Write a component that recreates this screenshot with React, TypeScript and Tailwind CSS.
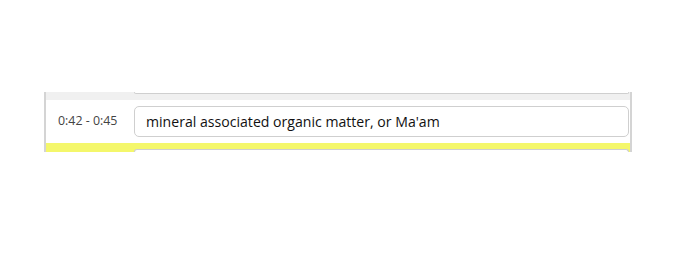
export default function App() {
  return (
    <div className="h-[276px] w-[686px] bg-white pt-[92px] pl-[44px] font-['Open_Sans',sans-serif]">
      <div className="w-[588px] overflow-hidden border-l-2 border-r-2 border-[#d4d4d4]">
        <div className="h-[8px] bg-[#f0f0f0] pl-[88px] pr-[1px]">
          <div className="h-[2px] rounded-b-[5px] border border-t-0 border-[#cfcfcf] bg-white" />
        </div>
        <div className="flex items-center bg-white py-[6px] pr-[1px]">
          <div className="w-[88px] pl-[12px] text-[12.4px] text-[#444]">0:42 - 0:45</div>
          <input
            className="h-[31px] flex-1 rounded-[5px] border border-[#cfcfcf] bg-white px-[11px] text-[14.1px] text-[#111] outline-none"
            defaultValue="mineral associated organic matter, or Ma'am"
          />
        </div>
        <div className="h-[9px] bg-[#f4f76b] pt-[6px] pl-[88px] pr-[1px]">
          <div className="h-[3px] rounded-t-[5px] border border-b-0 border-[#cfcfcf] bg-white" />
        </div>
      </div>
    </div>
  );
}
